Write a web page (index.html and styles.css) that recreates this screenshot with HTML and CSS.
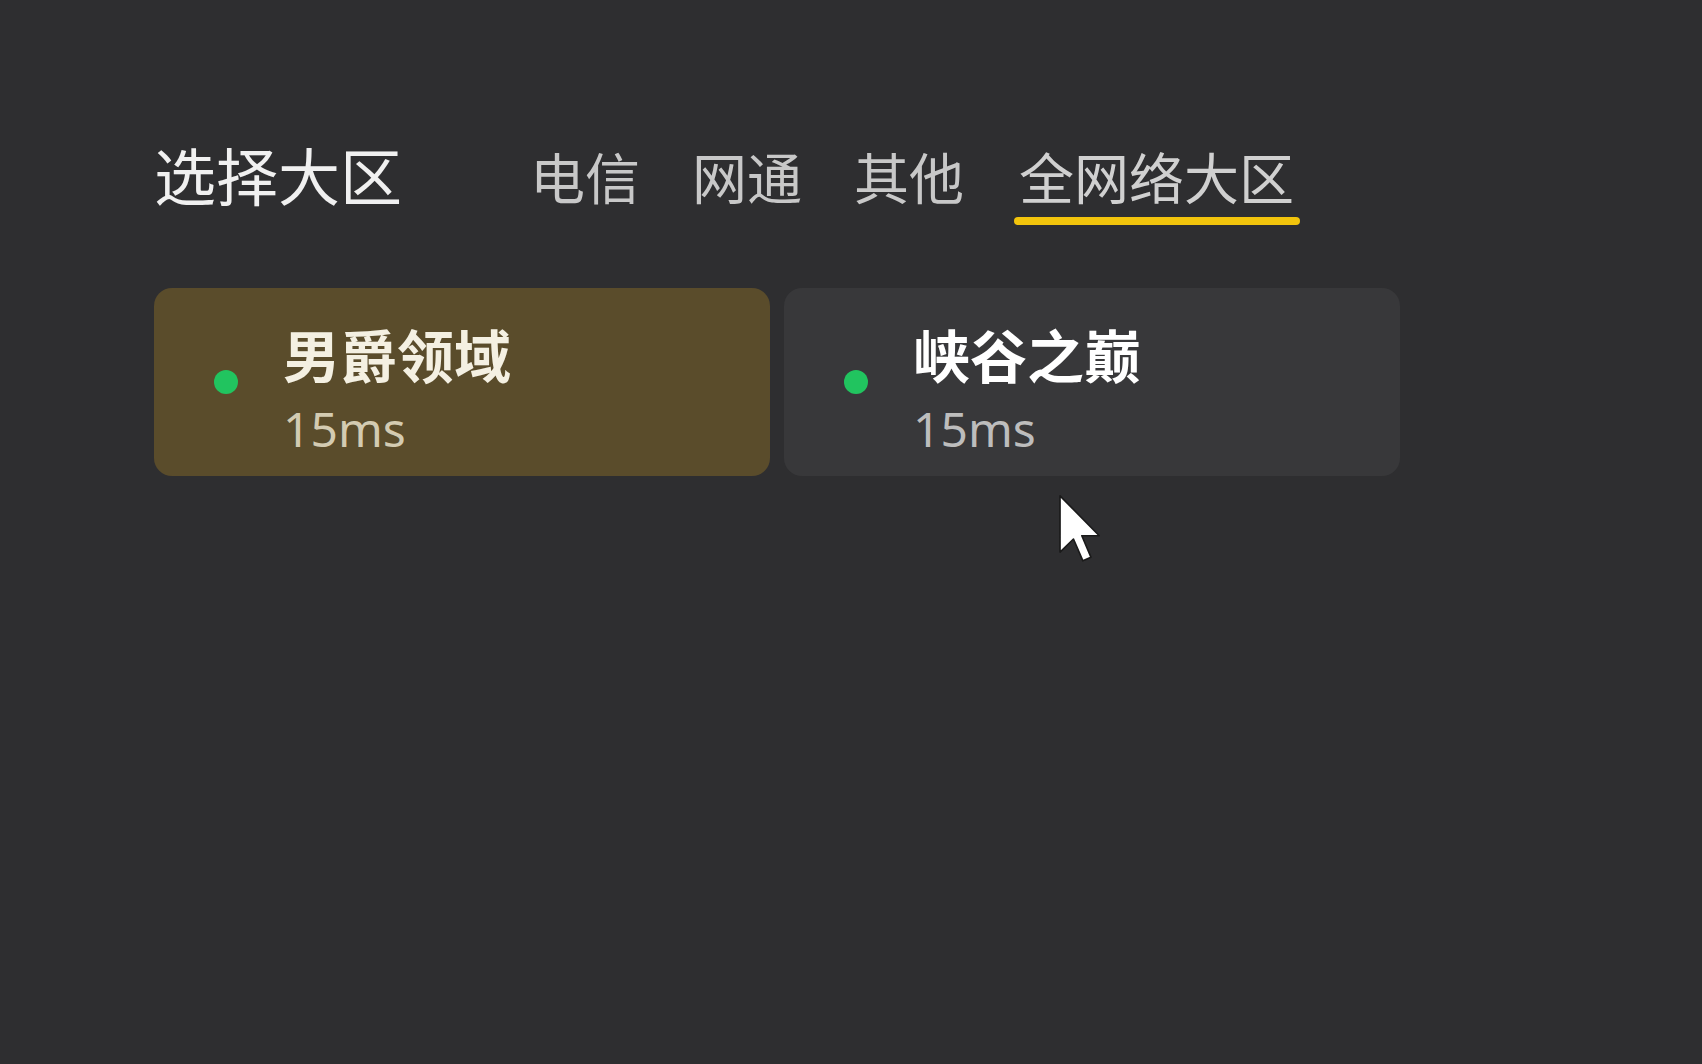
FILE: index.html
```html
<!DOCTYPE html>
<html lang="zh-CN">
<head>
<meta charset="utf-8">
<title>选择大区</title>
<link rel="stylesheet" href="styles.css">
</head>
<body>
<div class="page">
  <div class="header">
    <div class="title">选择大区</div>
    <div class="tabs">
      <div class="tab">电信</div>
      <div class="tab">网通</div>
      <div class="tab">其他</div>
      <div class="tab active">全网络大区</div>
    </div>
  </div>
  <div class="cards">
    <div class="card selected">
      <span class="dot"></span>
      <div class="info">
        <div class="name">男爵领域</div>
        <div class="ping">15ms</div>
      </div>
    </div>
    <div class="card">
      <span class="dot"></span>
      <div class="info">
        <div class="name">峡谷之巅</div>
        <div class="ping">15ms</div>
      </div>
    </div>
  </div>
  <svg class="cursor" width="44" height="69" viewBox="0 0 12 19">
    <path d="M0.5 0.5 L0.5 16 L4.2 12.4 L6.8 18.4 L9 17.4 L6.5 11.5 L11.3 11.5 Z" fill="#ffffff" stroke="#1a1a1a" stroke-width="0.45" stroke-linejoin="round"/>
  </svg>
</div>
</body>
</html>
```

FILE: styles.css
```css
html, body {
  margin: 0;
  padding: 0;
  background: #2e2e30;
}

body {
  font-family: "Noto Sans", "Noto Sans CJK SC", sans-serif;
  width: 1702px;
  height: 1064px;
  overflow: hidden;
}

.page {
  position: relative;
  padding: 140px 0 0 154px;
  height: 1064px;
  box-sizing: border-box;
}

.header {
  display: flex;
  align-items: flex-start;
}

.title {
  font-size: 62px;
  line-height: 74px;
  color: #f0f0f0;
}

.tabs {
  display: flex;
  gap: 36px;
  margin-left: 120px;
  padding-top: 5px;
}

.tab {
  font-size: 55px;
  line-height: 66px;
  color: #c8c8c8;
  padding: 0 8px;
}

.tab:last-child {
  margin-left: 3px;
}

.tab::after {
  content: "";
  display: block;
  height: 8px;
  margin: 6px -6px 0 -5px;
  border-radius: 4px;
  background: transparent;
}

.tab.active {
  color: #d0d0d0;
}

.tab.active::after {
  background: #f2c40c;
}

.cards {
  display: flex;
  gap: 14px;
  margin-top: 63px;
}

.card {
  width: 616px;
  height: 188px;
  box-sizing: border-box;
  border-radius: 18px;
  background: #38383a;
  display: flex;
  align-items: center;
  padding-left: 60px;
}

.card.selected {
  background: #5a4c2b;
}

.dot {
  width: 24px;
  height: 24px;
  border-radius: 50%;
  background: #21c45f;
  flex: none;
}

.info {
  margin-left: 45px;
  padding-top: 20px;
}

.name {
  font-size: 57px;
  line-height: 64px;
  font-weight: 700;
  color: #ffffff;
}

.ping {
  font-size: 48px;
  line-height: 64px;
  margin-top: 9px;
  color: #bdbdbd;
}

.card.selected .name {
  color: #f4f0e2;
}

.card.selected .ping {
  color: #d3cbb2;
}

.cursor {
  position: absolute;
  left: 1058px;
  top: 494px;
}
```
